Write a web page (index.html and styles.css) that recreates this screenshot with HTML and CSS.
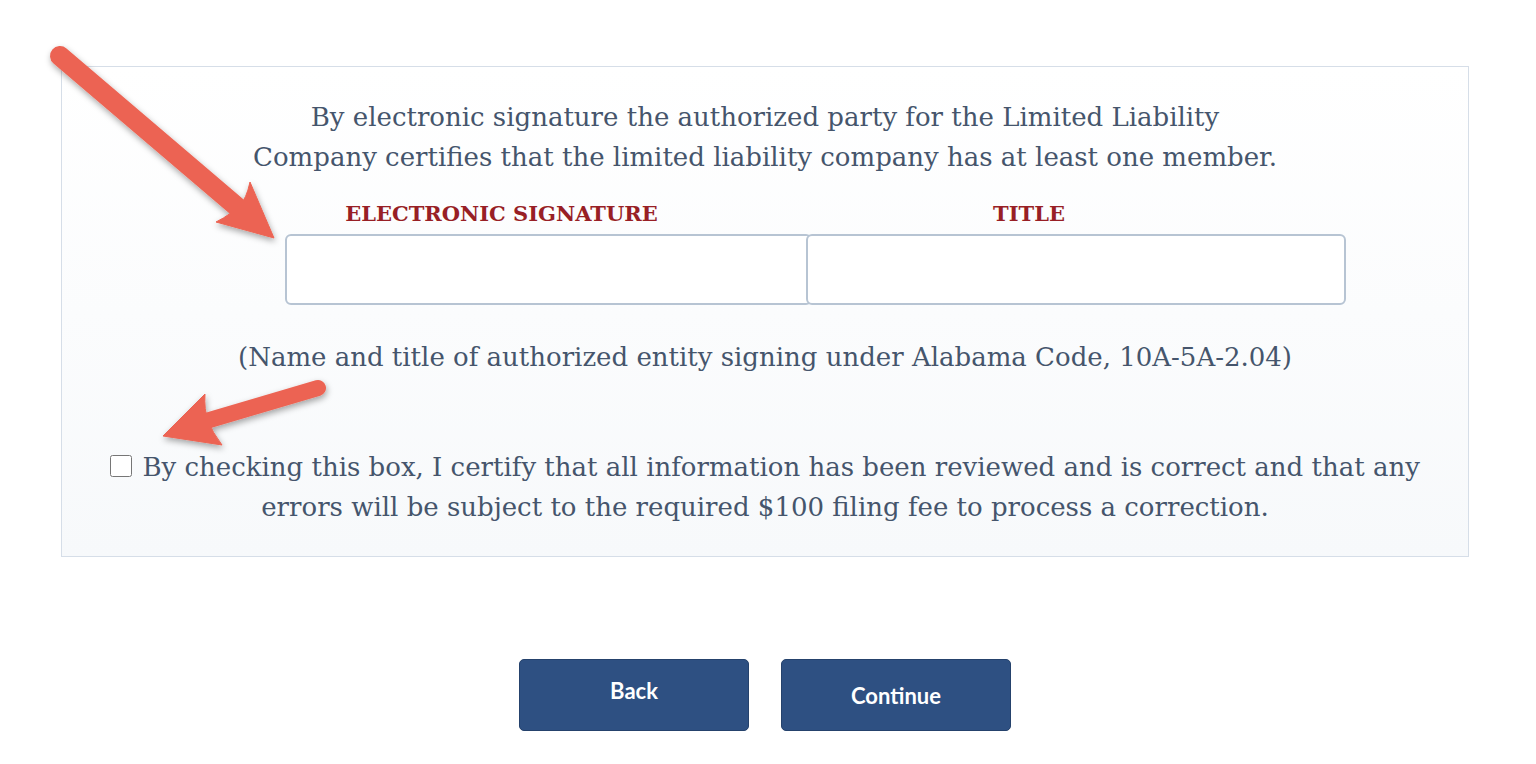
FILE: index.html
```html
<!DOCTYPE html>
<html>
<head>
<meta charset="utf-8">
<link rel="stylesheet" href="styles.css">
</head>
<body>
<div class="page">
  <section class="panel">
    <p class="intro">By electronic signature the authorized party for the Limited Liability<br>Company certifies that the limited liability company has at least one member.</p>
    <div class="fields">
      <div class="field">
        <label class="label">ELECTRONIC SIGNATURE</label>
        <input class="input" type="text">
      </div>
      <div class="field field-second">
        <label class="label">TITLE</label>
        <input class="input" type="text">
      </div>
    </div>
    <p class="note">(Name and title of authorized entity signing under Alabama Code, 10A-5A-2.04)</p>
    <p class="certify"><input class="check" type="checkbox"> By checking this box, I certify that all information has been reviewed and is correct and that any<br>errors will be subject to the required $100 filing fee to process a correction.</p>
  </section>
  <div class="actions">
    <button class="btn btn-back">Back</button>
    <button class="btn btn-continue">Continue</button>
  </div>
  <svg class="arrows" width="1536" height="764" viewBox="0 0 1536 764">
    <defs>
      <filter id="sh" x="-20%" y="-20%" width="140%" height="140%">
        <feDropShadow dx="1" dy="3" stdDeviation="3" flood-color="#000" flood-opacity="0.35"/>
      </filter>
    </defs>
    <g filter="url(#sh)" fill="#ec6453" stroke="#ec6453">
      <line x1="60" y1="56" x2="236" y2="206" stroke-width="20" stroke-linecap="round"/>
      <path d="M274 238 L250 182 Q246 200 240 204 Q232 214 216 222 Z" stroke-width="1" stroke-linejoin="round"/>
      <line x1="318" y1="388" x2="196" y2="424" stroke-width="16" stroke-linecap="round"/>
      <path d="M163 436 L205 394 Q204 410 208 420 Q212 432 222 445 Z" stroke-width="1" stroke-linejoin="round"/>
    </g>
  </svg>
</div>
</body>
</html>
```

FILE: styles.css
```css
html, body {
  margin: 0;
  padding: 0;
  background: #ffffff;
}

.page {
  position: relative;
  width: 1536px;
  height: 764px;
  overflow: hidden;
  padding-top: 66px;
  box-sizing: border-box;
}

.panel {
  margin-left: 61px;
  width: 1408px;
  height: 491px;
  box-sizing: border-box;
  border: 1.5px solid #d6dee8;
  background: linear-gradient(180deg, #ffffff 0%, #f7f9fb 100%);
  padding-top: 30px;
  font-family: "DejaVu Serif", serif;
  color: #45556c;
}

.intro {
  margin: 0;
  text-align: center;
  font-size: 26px;
  line-height: 40px;
}

.fields {
  display: flex;
  margin-left: 223px;
  margin-top: 24px;
}

.field {
  display: flex;
  flex-direction: column;
}

.field:first-child {
  width: 527px;
}

.field-second {
  width: 540px;
  margin-left: -6px;
}

.label {
  display: block;
  text-align: center;
  padding-right: 94px;
  font-family: "DejaVu Serif", serif;
  font-weight: bold;
  font-size: 21px;
  line-height: 24px;
  height: 24px;
  color: #981f25;
  margin-bottom: 8px;
  margin-top: 1px;
}

.input {
  box-sizing: border-box;
  width: 100%;
  height: 71px;
  border: 2px solid #b7c4d3;
  border-radius: 6px;
  background: #ffffff;
  margin: 0;
}

.note {
  margin: 32px 0 0 0;
  text-align: center;
  font-size: 26px;
  line-height: 40px;
}

.certify {
  margin: 70px 0 0 0;
  text-align: center;
  font-size: 26px;
  line-height: 40px;
}

.check {
  width: 22px;
  height: 22px;
  margin: 0 2px 0 0;
  vertical-align: -1px;
}

.actions {
  display: flex;
  justify-content: center;
  gap: 32px;
  margin-top: 102px;
  padding-right: 6px;
}

.btn {
  width: 230px;
  height: 72px;
  border: 1px solid #25426c;
  border-radius: 5px;
  background: #2e5082;
  color: #ffffff;
  font-family: Lato, "Liberation Sans", sans-serif;
  font-weight: bold;
  font-size: 22px;
  cursor: pointer;
}

.btn-back {
  padding-bottom: 10px;
}

.btn-continue {
  padding-top: 2px;
}

.arrows {
  position: absolute;
  left: 0;
  top: 0;
  pointer-events: none;
}
```
